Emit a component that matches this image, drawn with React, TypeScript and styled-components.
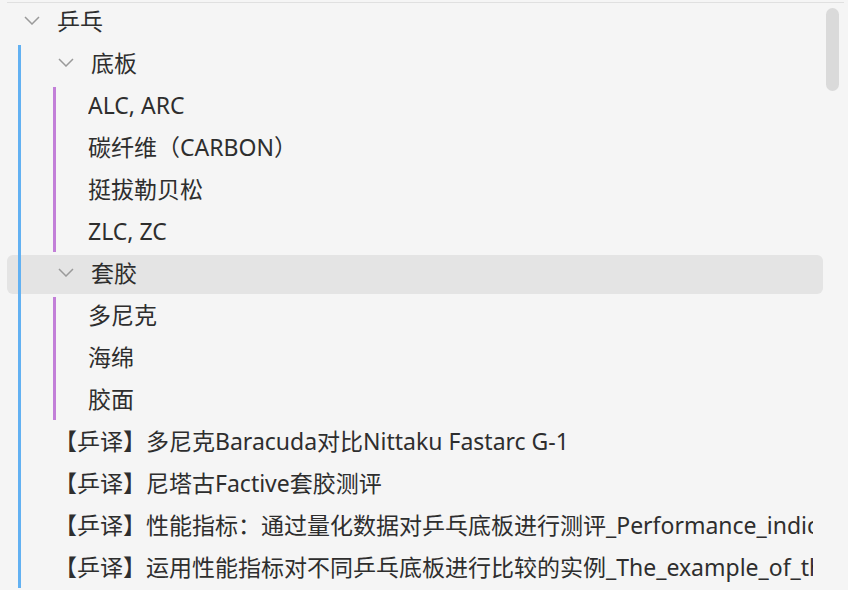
import { FC } from 'react';
import styled, { createGlobalStyle } from 'styled-components';

type TreeNode = {
  label: string;
  children?: TreeNode[];
  guide?: string;
  active?: boolean;
};

const tree: TreeNode = {
  label: '乒乓',
  guide: '#62b1f2',
  children: [
    {
      label: '底板',
      guide: '#c27fd8',
      children: [
        { label: 'ALC, ARC' },
        { label: '碳纤维（CARBON）' },
        { label: '挺拔勒贝松' },
        { label: 'ZLC, ZC' },
      ],
    },
    {
      label: '套胶',
      guide: '#c27fd8',
      active: true,
      children: [{ label: '多尼克' }, { label: '海绵' }, { label: '胶面' }],
    },
    { label: '【乒译】多尼克Baracuda对比Nittaku Fastarc G-1' },
    { label: '【乒译】尼塔古Factive套胶测评' },
    {
      label:
        '【乒译】性能指标：通过量化数据对乒乓底板进行测评_Performance_indices_of_table_tennis_blades',
    },
    {
      label:
        '【乒译】运用性能指标对不同乒乓底板进行比较的实例_The_example_of_the_comparison_of_blades',
    },
  ],
};

const Chevron: FC = () => (
  <ChevronSvg width="16" height="9" viewBox="0 0 16 9">
    <polyline points="1,1 8,8 15,1" fill="none" stroke="#9a9a9a" strokeWidth="1.5" />
  </ChevronSvg>
);

const Node: FC<{ node: TreeNode; depth: number }> = ({ node, depth }) => {
  const isFolder = !!node.children;
  if (!isFolder) {
    return (
      <Row $indent={47 + 34 * (depth - 1)}>
        <Label>{node.label}</Label>
      </Row>
    );
  }
  return (
    <>
      <Row $indent={17 + 34 * depth} $active={node.active}>
        <Chevron />
        <Label>{node.label}</Label>
      </Row>
      <Group>
        <Guide $left={11 + 35 * depth} $color={node.guide || '#ccc'} />
        {node.children!.map((child, i) => (
          <Node key={i} node={child} depth={depth + 1} />
        ))}
      </Group>
    </>
  );
};

const App: FC = () => {
  return (
    <>
      <GlobalStyle />
      <Panel>
        <Tree>
          <Node node={tree} depth={0} />
        </Tree>
        <Thumb />
      </Panel>
    </>
  );
};

export default App;

const GlobalStyle = createGlobalStyle`
  html, body {
    margin: 0;
    padding: 0;
    height: 590px;
    overflow: hidden;
    background: #f5f5f5;
  }
  body {
    font-family: "Noto Sans", "Noto Sans CJK SC", sans-serif;
    color: #2e2e2e;
  }
`;

const Panel = styled.div`
  position: relative;
  margin: 2px 4px 0 7px;
  border-top: 1px solid #e0e0e0;
  height: 587px;
  overflow: hidden;
`;

const Tree = styled.div`
  width: 816px;
`;

const Row = styled.div<{ $indent: number; $active?: boolean }>`
  display: flex;
  align-items: center;
  gap: 17px;
  height: 39px;
  margin-bottom: 3px;
  padding: 0 10px 0 ${(p) => p.$indent}px;
  border-radius: 6px;
  background: ${(p) => (p.$active ? '#e4e4e4' : 'transparent')};
`;

const ChevronSvg = styled.svg`
  flex: none;
  margin-top: -4px;
`;

const Label = styled.span`
  flex: 1;
  min-width: 0;
  overflow: hidden;
  font-size: 23px;
  line-height: 39px;
  margin-top: -2px;
  white-space: nowrap;
`;

const Group = styled.div`
  position: relative;
`;

const Guide = styled.span<{ $left: number; $color: string }>`
  position: absolute;
  left: ${(p) => p.$left}px;
  top: 0;
  bottom: 0;
  width: 3px;
  background: ${(p) => p.$color};
`;

const Thumb = styled.div`
  position: absolute;
  left: 819px;
  top: 5px;
  width: 13px;
  height: 83px;
  border-radius: 7px;
  background: #dadada;
`;
